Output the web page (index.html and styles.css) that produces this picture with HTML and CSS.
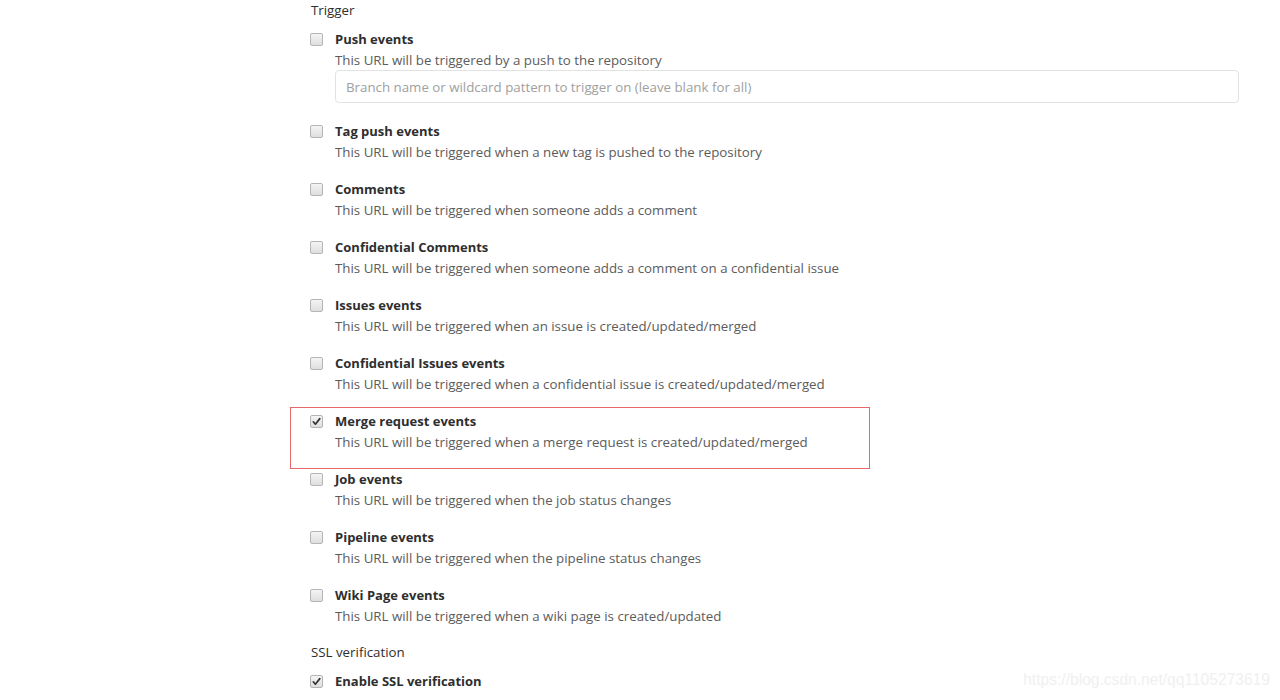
FILE: index.html
```html
<!DOCTYPE html>
<html>
<head>
<meta charset="utf-8">
<link rel="stylesheet" href="styles.css">
</head>
<body>
<div class="page">
  <div class="form">
    <div class="section-title">Trigger</div>

    <div class="item">
      <span class="cb"></span>
      <div class="body">
        <div class="title">Push events</div>
        <div class="desc">This URL will be triggered by a push to the repository</div>
        <div class="input">Branch name or wildcard pattern to trigger on (leave blank for all)</div>
      </div>
    </div>

    <div class="item">
      <span class="cb"></span>
      <div class="body">
        <div class="title">Tag push events</div>
        <div class="desc">This URL will be triggered when a new tag is pushed to the repository</div>
      </div>
    </div>

    <div class="item">
      <span class="cb"></span>
      <div class="body">
        <div class="title">Comments</div>
        <div class="desc">This URL will be triggered when someone adds a comment</div>
      </div>
    </div>

    <div class="item">
      <span class="cb"></span>
      <div class="body">
        <div class="title">Confidential Comments</div>
        <div class="desc">This URL will be triggered when someone adds a comment on a confidential issue</div>
      </div>
    </div>

    <div class="item">
      <span class="cb"></span>
      <div class="body">
        <div class="title">Issues events</div>
        <div class="desc">This URL will be triggered when an issue is created/updated/merged</div>
      </div>
    </div>

    <div class="item">
      <span class="cb"></span>
      <div class="body">
        <div class="title">Confidential Issues events</div>
        <div class="desc">This URL will be triggered when a confidential issue is created/updated/merged</div>
      </div>
    </div>

    <div class="item">
      <span class="cb checked"><svg viewBox="0 0 13 13" width="13" height="13"><path d="M3.3 6.8 L5.4 9.2 L9.8 3.6" fill="none" stroke="#333" stroke-width="1.7" stroke-linecap="round" stroke-linejoin="round"/></svg></span>
      <div class="body">
        <div class="title">Merge request events</div>
        <div class="desc">This URL will be triggered when a merge request is created/updated/merged</div>
      </div>
      <div class="redbox"></div>
    </div>

    <div class="item">
      <span class="cb"></span>
      <div class="body">
        <div class="title">Job events</div>
        <div class="desc">This URL will be triggered when the job status changes</div>
      </div>
    </div>

    <div class="item">
      <span class="cb"></span>
      <div class="body">
        <div class="title">Pipeline events</div>
        <div class="desc">This URL will be triggered when the pipeline status changes</div>
      </div>
    </div>

    <div class="item">
      <span class="cb"></span>
      <div class="body">
        <div class="title">Wiki Page events</div>
        <div class="desc">This URL will be triggered when a wiki page is created/updated</div>
      </div>
    </div>

    <div class="section-title ssl">SSL verification</div>
    <div class="item">
      <span class="cb checked"><svg viewBox="0 0 13 13" width="13" height="13"><path d="M3.3 6.8 L5.4 9.2 L9.8 3.6" fill="none" stroke="#333" stroke-width="1.7" stroke-linecap="round" stroke-linejoin="round"/></svg></span>
      <div class="body">
        <div class="title">Enable SSL verification</div>
      </div>
    </div>
  </div>
  <div class="watermark">https://blog.csdn.net/qq1105273619</div>
</div>
</body>
</html>
```
FILE: styles.css
```css
html, body {
  margin: 0;
  padding: 0;
  background: #ffffff;
}
body {
  font-family: "Open Sans", "Noto Sans", Arial, sans-serif;
  font-size: 13px;
  color: #2e2e2e;
  height: 700px;
  overflow: hidden;
}
.page {
  position: relative;
  height: 700px;
}
.form {
  padding-left: 310px;
  width: 929px;
}
.section-title {
  line-height: 20px;
  font-size: 13.3px;
  color: #2e2e2e;
  margin-bottom: 9px;
  margin-left: 1px;
}
.section-title.ssl {
  margin-top: -1px;
}
.item {
  position: relative;
  display: flex;
  align-items: flex-start;
  gap: 12px;
  margin-bottom: 17px;
}
.cb {
  flex: none;
  width: 11px;
  height: 11px;
  margin-top: 4px;
  border: 1px solid #b5b5b5;
  border-radius: 2px;
  background: linear-gradient(#f4f4f4, #dedede);
  position: relative;
}
.cb svg {
  position: absolute;
  left: -1px;
  top: -1px;
}
.body {
  flex: 1;
}
.title {
  font-weight: 700;
  line-height: 20px;
  color: #2e2e2e;
}
.desc {
  margin-top: 1px;
  line-height: 20px;
  font-size: 13.3px;
  color: #5c5c5c;
}
.input {
  margin-top: 0;
  height: 31px;
  border: 1px solid #e2e2e2;
  border-radius: 4px;
  line-height: 33px;
  font-size: 13.3px;
  padding-left: 10px;
  color: #a0a0a0;
  margin-bottom: 1px;
}
.redbox {
  position: absolute;
  left: -20px;
  top: -4px;
  width: 578px;
  height: 60px;
  border: 1px solid #e8686a;
  pointer-events: none;
}
.watermark {
  position: absolute;
  right: 10px;
  top: 671px;
  font-family: "Liberation Sans", Arial, sans-serif;
  font-size: 15.6px;
  color: #f0f0f0;
}
```
